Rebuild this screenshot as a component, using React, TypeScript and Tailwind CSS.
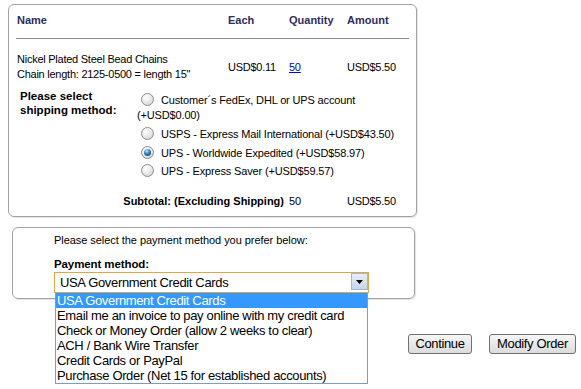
import React from 'react'

const Radio = ({checked}: {checked?: boolean}) => (
    <span className="relative inline-block w-[13px] h-[13px] shrink-0 rounded-full border border-[#8f8f8f] bg-[radial-gradient(circle_at_35%_30%,#ffffff,#e6e6e6_55%,#c4c4c4)] -translate-y-[1px]">
        {checked && (
            <span className="absolute left-[2px] top-[2px] w-[7px] h-[7px] rounded-full bg-[radial-gradient(circle_at_40%_30%,#bfe6ff,#2a7fbf_45%,#0b3d66)]"/>
        )}
    </span>
)

const shipping = [
    {label: 'USPS - Express Mail International (+USD$43.50)', mt: 'mt-[4px]'},
    {label: 'UPS - Worldwide Expedited (+USD$58.97)', mt: 'mt-[4px]', checked: true},
    {label: 'UPS - Express Saver (+USD$59.57)', mt: 'mt-[3px]'},
]

const payments = [
    'USA Government Credit Cards',
    'Email me an invoice to pay online with my credit card',
    'Check or Money Order (allow 2 weeks to clear)',
    'ACH / Bank Wire Transfer',
    'Credit Cards or PayPal',
    'Purchase Order (Net 15 for established accounts)',
]

export default function App() {
    return (
        <div className="w-[581px] h-[389px] bg-white text-black font-['Liberation_Sans',Arial,sans-serif] overflow-hidden">
            {/* order card */}
            <div className="ml-[8px] mt-[4px] w-[409px] h-[213px] border border-[#a3a3a3] rounded-[6px] shadow-[1px_1px_1px_rgba(0,0,0,0.12)] pt-[9px]">
                <div className="grid grid-cols-[211px_61px_58px_1fr] px-[8px] text-[11px] leading-[13px] font-bold text-[#2e2e5c]">
                    <div>Name</div>
                    <div>Each</div>
                    <div>Quantity</div>
                    <div>Amount</div>
                </div>
                <div className="mx-[7px] mt-[11px] h-[1px] bg-[#8a8a8a]"/>

                <div className="grid grid-cols-[211px_61px_58px_1fr] items-center px-[8px] mt-[13px] text-[11px] leading-[15px] tracking-[-0.25px]">
                    <div>
                        <div>Nickel Plated Steel Bead Chains</div>
                        <div>Chain length: 2125-0500 = length 15"</div>
                    </div>
                    <div>USD$0.11</div>
                    <div><a href="#" className="text-[#0000ee] underline">50</a></div>
                    <div>USD$5.50</div>
                </div>

                <div className="grid grid-cols-[120px_1fr] px-[8px] mt-[7px]">
                    <div className="pl-[3px] text-[11.5px] leading-[14px] font-bold">
                        Please select<br/>shipping method:
                    </div>
                    <div className="pt-[4px] text-[11px] leading-[15px] tracking-[-0.15px]">
                        <div className="flex items-center h-[15px] pl-[4px] gap-[7px]">
                            <Radio/>
                            <span>Customer´s FedEx, DHL or UPS account</span>
                        </div>
                        <div className="h-[15px]">(+USD$0.00)</div>
                        {shipping.map(s => (
                            <div key={s.label} className={`flex items-center h-[15px] pl-[4px] gap-[7px] ${s.mt}`}>
                                <Radio checked={s.checked}/>
                                <span>{s.label}</span>
                            </div>
                        ))}
                    </div>
                </div>

                <div className="grid grid-cols-[272px_58px_1fr] px-[8px] mt-[15px] text-[11px] leading-[15px]">
                    <div className="text-right pr-[5px] font-bold">Subtotal: (Excluding Shipping)</div>
                    <div>50</div>
                    <div className="tracking-[-0.25px]">USD$5.50</div>
                </div>
            </div>

            {/* payment card */}
            <div className="ml-[12px] mt-[10px] w-[403px] h-[72px] border border-[#a3a3a3] rounded-[6px] shadow-[1px_1px_1px_rgba(0,0,0,0.12)] pl-[41px] pt-[6px]">
                <div className="text-[11px] leading-[13px] tracking-[-0.05px]">Please select the payment method you prefer below:</div>
                <div className="mt-[10px] text-[11.5px] leading-[14px] font-bold tracking-[-0.1px]">Payment method:</div>
                <div className="relative mt-[1px] w-[315px] z-10">
                    <div className="flex h-[21px] border border-[#e2a744] bg-white">
                        <div className="flex-1 pl-[5px] text-[13px] leading-[19px] tracking-[-0.35px]">USA Government Credit Cards</div>
                        <div className="w-[17px] h-[17px] border border-[#9fb8d0] bg-[linear-gradient(#e6eef8,#c5d7ec)] flex items-center justify-center">
                            <svg width="7" height="4" viewBox="0 0 7 4"><path d="M0 0h7L3.5 4z" fill="#000"/></svg>
                        </div>
                    </div>
                    <div className="absolute left-[1px] right-[1px] top-full border-x border-b border-[#7f9db9] bg-white">
                        {payments.map((p, i) => (
                            <div
                                key={p}
                                className={`h-[15px] pl-[1px] text-[13px] leading-[15px] tracking-[-0.35px] whitespace-nowrap ${i === 0 ? 'bg-[#3399ff] text-white' : 'text-black'}`}
                            >
                                {p}
                            </div>
                        ))}
                    </div>
                </div>
            </div>

            {/* buttons */}
            <div className="flex justify-end gap-[17px] pr-[5px] mt-[35px]">
                <button className="w-[64px] h-[20px] border border-[#707070] rounded-[3px] bg-[linear-gradient(#f6f6f6,#dcdcdc)] text-[13px] leading-[18px] tracking-[-0.35px]">Continue</button>
                <button className="w-[87px] h-[20px] border border-[#707070] rounded-[3px] bg-[linear-gradient(#f6f6f6,#dcdcdc)] text-[13px] leading-[18px] tracking-[-0.35px]">Modify Order</button>
            </div>
        </div>
    )
}
